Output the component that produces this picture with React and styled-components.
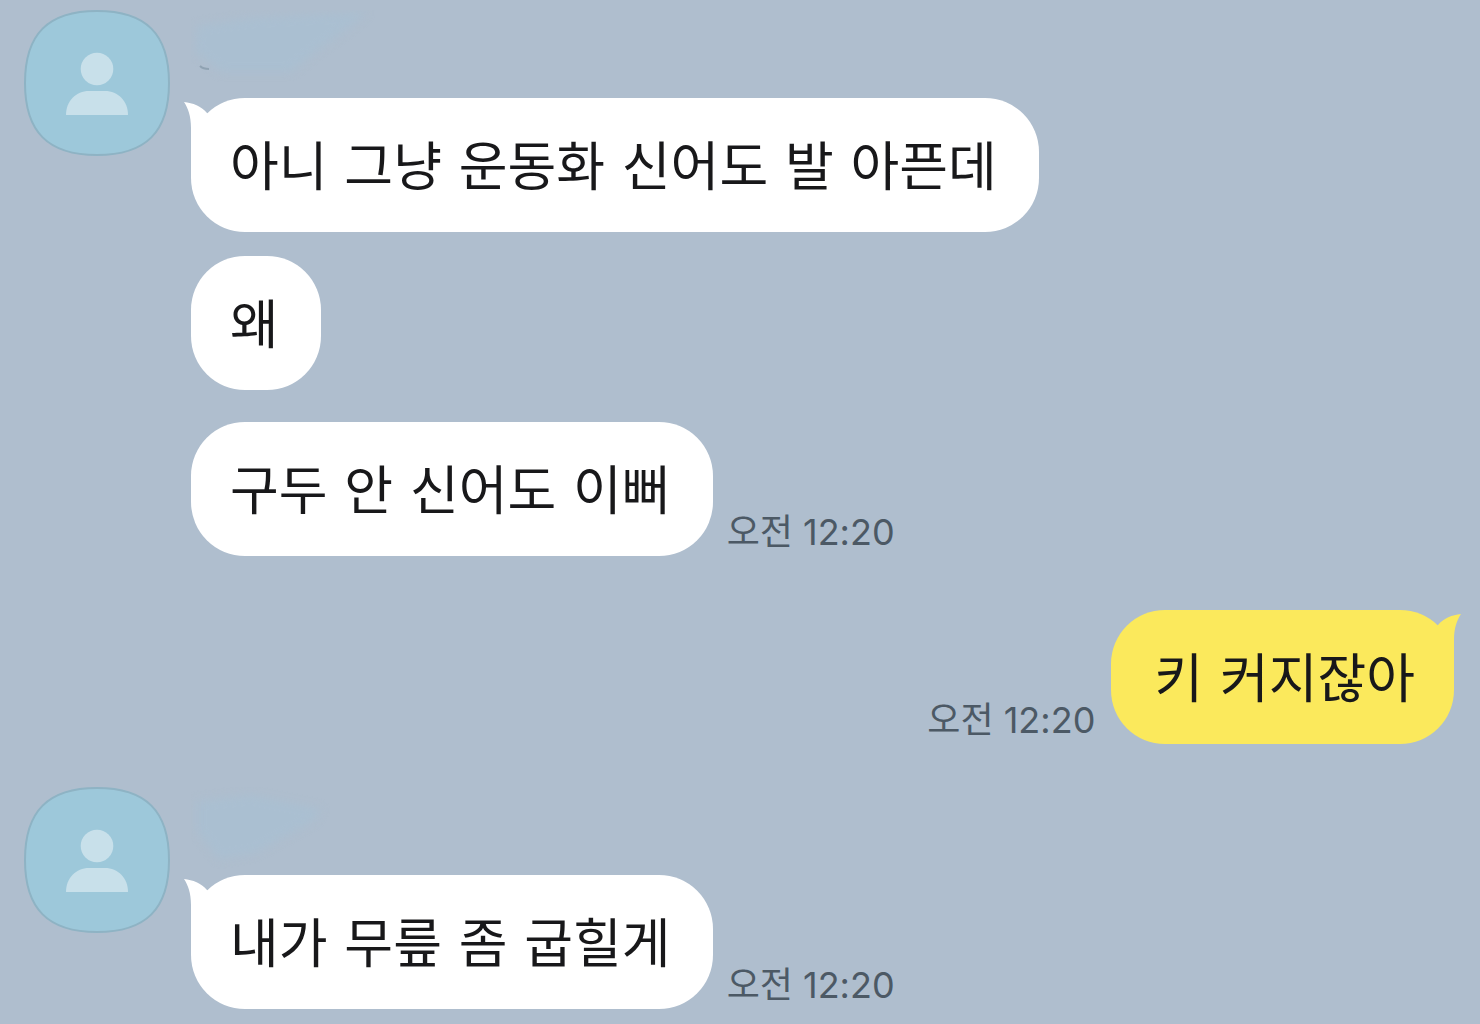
import React from "react";
import styled, { createGlobalStyle } from "styled-components";

const GlobalStyle = createGlobalStyle`
  * { box-sizing: border-box; }
  body { margin: 0; background: #afbece; }
`;

const Chat = styled.main`
  display: flex;
  flex-direction: column;
  min-height: 100vh;
  padding: 10px 26px 15px 24px;
  color: #18181a;
  background: #afbece;
  font-family: "DejaVu Sans", "Noto Sans CJK KR", sans-serif;
`;

const Group = styled.section`
  display: flex;
  gap: 21px;
  justify-content: ${(p) => (p.$mine ? "flex-end" : "flex-start")};
  margin-bottom: ${(p) => p.$after || 0}px;
`;

const Profile = styled.svg`
  flex: none;
  display: block;
  width: 146px;
  height: 146px;
`;

const Messages = styled.div`
  display: flex;
  flex-direction: column;
`;

const Name = styled.svg`
  display: block;
  width: 190px;
  height: 88px;
`;

const Row = styled.div`
  display: flex;
  align-items: flex-end;
  gap: ${(p) => (p.$mine ? 16 : 14)}px;
  margin-bottom: ${(p) => p.$after || 0}px;
`;

const Bubble = styled.p`
  position: relative;
  margin: 0;
  padding: ${(p) => (p.$mine ? "35px 39px 29px 43px" : "35px 42px 29px 39px")};
  border-radius: 54px;
  background: ${(p) => (p.$mine ? "#fbe95c" : "#ffffff")};
  font-size: 53px;
  line-height: 70px;
  white-space: nowrap;
`;

const TailShape = styled.svg`
  position: absolute;
  top: 0;
  ${(p) => (p.$mine ? "right: -8px; transform: scaleX(-1);" : "left: -8px;")}
  width: 32px;
  height: 60px;
  fill: ${(p) => (p.$mine ? "#fbe95c" : "#ffffff")};
`;

const Time = styled.time`
  padding-bottom: 2px;
  color: #4c5965;
  font-family: Inter, "Noto Sans CJK KR", sans-serif;
  font-size: 36px;
  line-height: 44px;
  white-space: nowrap;
`;

function Avatar() {
  return (
    <Profile viewBox="0 0 146 146" role="img" aria-label="프로필">
      <path
        d="M73 1C122 1 145 24 145 73S122 145 73 145S1 122 1 73S24 1 73 1Z"
        fill="#9dc8da"
        stroke="#8eb3c4"
        strokeWidth="2"
      />
      <circle cx="73" cy="59" r="16.3" fill="#c8e0ea" />
      <path d="M42 105C42 91 52 81 65 81H81C94 81 104 91 104 105Z" fill="#c8e0ea" />
    </Profile>
  );
}

function Tail({ mine }) {
  return (
    <TailShape $mine={mine} viewBox="0 0 32 60" aria-hidden="true">
      <path d="M1 4C10 5 18 8 24 15L32 22V60H8V30C8 18 5 10 1 4Z" />
    </TailShape>
  );
}

function HiddenName({ marked }) {
  return (
    <Name viewBox="0 0 190 88" aria-hidden="true">
      <defs>
        <filter id="soft" x="-20%" y="-20%" width="140%" height="140%" colorInterpolationFilters="sRGB">
          <feGaussianBlur stdDeviation="4" />
        </filter>
      </defs>
      <path
        d={marked ? "M6 16L60 8L176 2L160 16L124 42L100 62H30L4 42Z" : "M6 14L60 8L130 22L122 34L64 66L28 72L6 44Z"}
        fill="#aabfd1"
        filter="url(#soft)"
      />
      {marked && <path d="M9 56Q12 59 18 59" fill="none" stroke="#8fa2b2" strokeWidth="2" />}
    </Name>
  );
}

export default function App() {
  return (
    <>
      <GlobalStyle />
      <Chat>
        <Group $after={54}>
          <Avatar />
          <Messages>
            <HiddenName marked />
            <Row $after={24}>
              <Bubble><Tail />아니 그냥 운동화 신어도 발 아픈데</Bubble>
            </Row>
            <Row $after={32}>
              <Bubble>왜</Bubble>
            </Row>
            <Row>
              <Bubble>구두 안 신어도 이뻐</Bubble>
              <Time>오전 12:20</Time>
            </Row>
          </Messages>
        </Group>
        <Group $mine $after={43}>
          <Row $mine>
            <Time>오전 12:20</Time>
            <Bubble $mine><Tail mine />키 커지잖아</Bubble>
          </Row>
        </Group>
        <Group>
          <Avatar />
          <Messages>
            <HiddenName />
            <Row>
              <Bubble><Tail />내가 무릎 좀 굽힐게</Bubble>
              <Time>오전 12:20</Time>
            </Row>
          </Messages>
        </Group>
      </Chat>
    </>
  );
}
